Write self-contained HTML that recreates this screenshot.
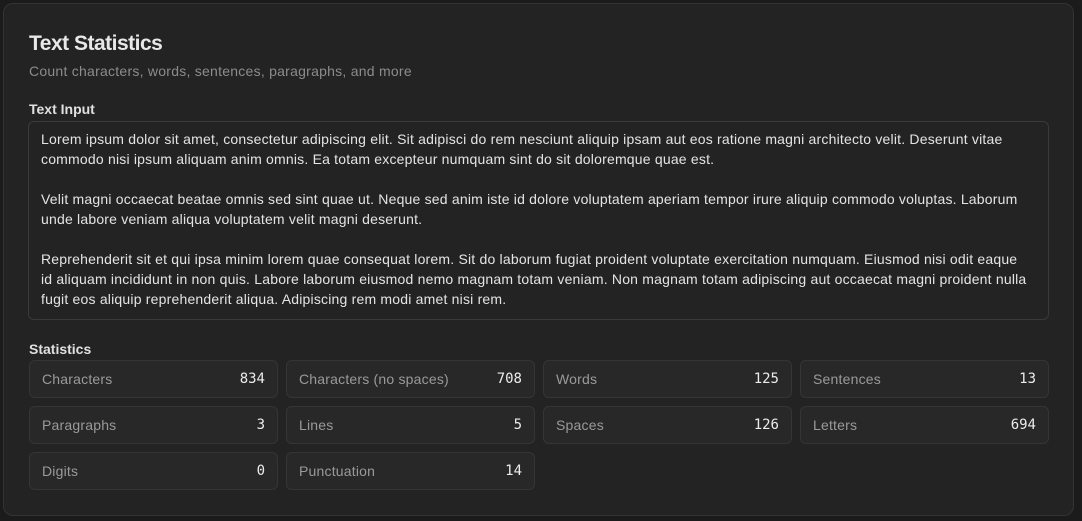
<!DOCTYPE html>
<html><head><style>
*{box-sizing:border-box;margin:0;padding:0}
body{width:1082px;height:521px;background:#1b1b1b;font-family:"Liberation Sans",sans-serif;overflow:hidden}
.card{position:absolute;left:3px;top:3px;width:1071px;height:513px;background:#232323;border:1px solid #333;border-radius:10px}
h1{position:absolute;left:25px;top:28px;font-size:21px;font-weight:bold;color:#e8e8e8;letter-spacing:-0.5px}
.sub{position:absolute;left:25px;top:59px;font-size:14px;letter-spacing:0.25px;color:#8c8c8c}
.lbl{position:absolute;left:25px;font-size:14px;color:#e0e0e0;font-weight:bold}
.ta{position:absolute;left:24px;top:117px;width:1021px;height:199px;border:1px solid #3a3a3a;border-radius:6px;background:#232323;padding:7px 12px;font-size:14px;letter-spacing:0.2px;line-height:20px;color:#e4e4e4;white-space:pre-wrap}
.s{position:absolute;width:249px;height:38px;border:1px solid #353535;border-radius:6px;background:#282828;padding:0 12px;display:flex;justify-content:space-between;align-items:center;font-size:14px;letter-spacing:0.2px}
.s span:first-child{color:#9a9a9a}
.s span:last-child{color:#ececec;font-family:"DejaVu Sans Mono",monospace;font-size:14px;letter-spacing:0}
</style></head><body>
<div class="card">
<h1>Text Statistics</h1>
<div class="sub">Count characters, words, sentences, paragraphs, and more</div>
<div class="lbl" style="top:97px">Text Input</div>
<div class="ta">Lorem ipsum dolor sit amet, consectetur adipiscing elit. Sit adipisci do rem nesciunt aliquip ipsam aut eos ratione magni architecto velit. Deserunt vitae commodo nisi ipsum aliquam anim omnis. Ea totam excepteur numquam sint do sit doloremque quae est.

Velit magni occaecat beatae omnis sed sint quae ut. Neque sed anim iste id dolore voluptatem aperiam tempor irure aliquip commodo voluptas. Laborum unde labore veniam aliqua voluptatem velit magni deserunt.

Reprehenderit sit et qui ipsa minim lorem quae consequat lorem. Sit do laborum fugiat proident voluptate exercitation numquam. Eiusmod nisi odit eaque
id aliquam incididunt in non quis. Labore laborum eiusmod nemo magnam totam veniam. Non magnam totam adipiscing aut occaecat magni proident nulla
fugit eos aliquip reprehenderit aliqua. Adipiscing rem modi amet nisi rem.</div>
<div class="lbl" style="top:337px">Statistics</div>
<div class="s" style="left:25px;top:356px"><span>Characters</span><span>834</span></div>
<div class="s" style="left:282px;top:356px"><span>Characters (no spaces)</span><span>708</span></div>
<div class="s" style="left:539px;top:356px"><span>Words</span><span>125</span></div>
<div class="s" style="left:796px;top:356px"><span>Sentences</span><span>13</span></div>
<div class="s" style="left:25px;top:402px"><span>Paragraphs</span><span>3</span></div>
<div class="s" style="left:282px;top:402px"><span>Lines</span><span>5</span></div>
<div class="s" style="left:539px;top:402px"><span>Spaces</span><span>126</span></div>
<div class="s" style="left:796px;top:402px"><span>Letters</span><span>694</span></div>
<div class="s" style="left:25px;top:448px"><span>Digits</span><span>0</span></div>
<div class="s" style="left:282px;top:448px"><span>Punctuation</span><span>14</span></div>
</div>
</body></html>
